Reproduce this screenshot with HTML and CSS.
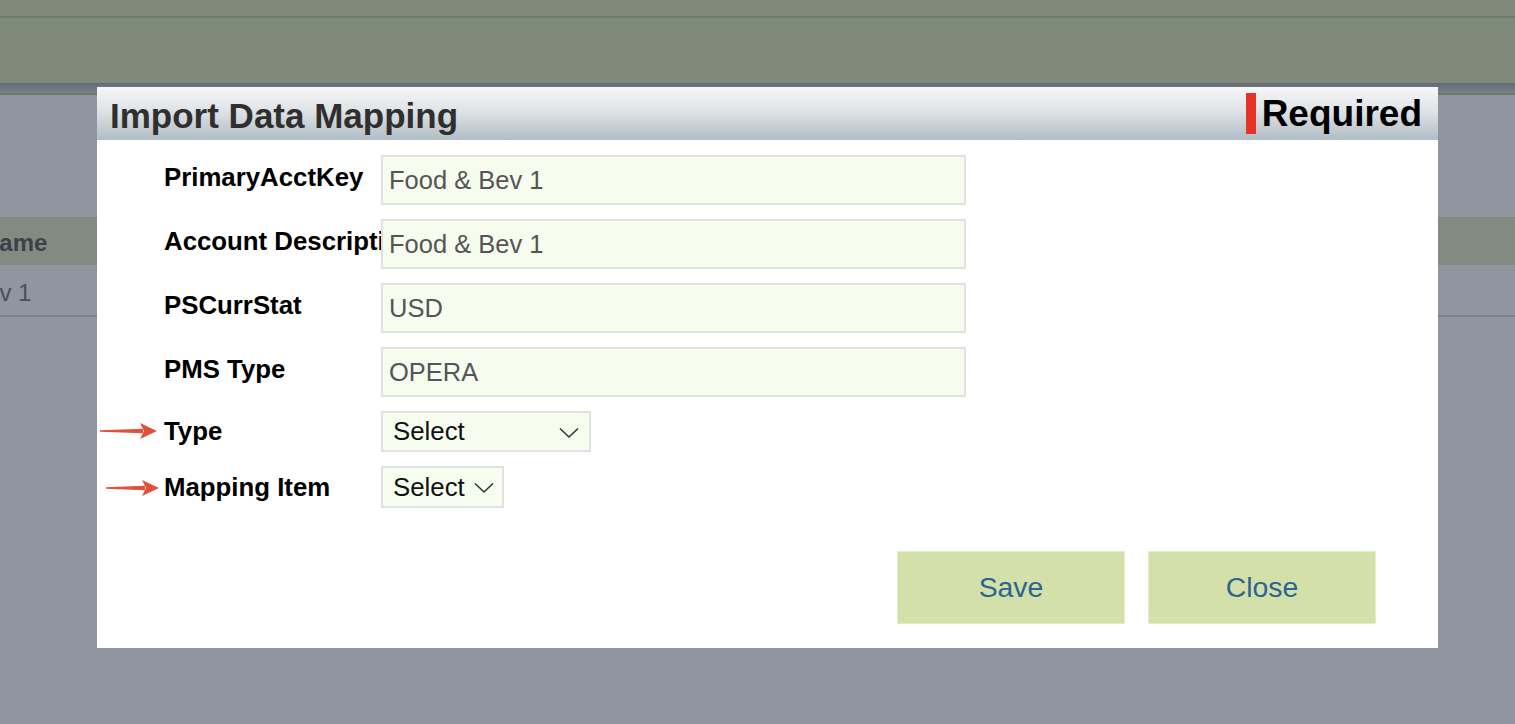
FILE: index.html
```html
<!DOCTYPE html>
<html lang="en">
<head>
    <meta charset="UTF-8">
    <meta name="viewport" content="width=device-width, initial-scale=1.0">
    <title>Import Data Mapping</title>
    <link rel="stylesheet" href="styles.css">
</head>
<body>
    <div class="topbar">
        <div class="topbar-line"></div>
    </div>
    <div class="subbar"></div>

    <div class="page">
        <div class="grid">
            <div class="grid-head">Name</div>
            <div class="grid-row">Food &amp; Bev 1</div>
        </div>
    </div>

    <div class="modal">
        <div class="modal-header">
            <h1>Import Data Mapping</h1>
            <div class="required"><span class="req-bar"></span>Required</div>
        </div>
        <div class="modal-body">
            <div class="form-row">
                <label>PrimaryAcctKey</label>
                <div class="field">Food &amp; Bev 1</div>
            </div>
            <div class="form-row">
                <label>Account Description</label>
                <div class="field">Food &amp; Bev 1</div>
            </div>
            <div class="form-row">
                <label>PSCurrStat</label>
                <div class="field">USD</div>
            </div>
            <div class="form-row">
                <label>PMS Type</label>
                <div class="field">OPERA</div>
            </div>
            <div class="form-row select-row">
                <label class="marked">
                    <svg class="arrow" width="58" height="18" viewBox="0 0 58 18">
                        <path d="M0 8.3 L43 6.8 L43 11.2 L0 9.7 Z" fill="#e0503a"/>
                        <path d="M40 1 L57 9 L40 17 L44 9 Z" fill="#e0503a"/>
                    </svg>
                    Type
                </label>
                <div class="select select-wide">Select
                    <svg class="chev" width="20" height="12" viewBox="0 0 20 12"><path d="M1 1.5 L10 10 L19 1.5" fill="none" stroke="#333" stroke-width="1.6"/></svg>
                </div>
            </div>
            <div class="form-row select-row small">
                <label class="marked">
                    <svg class="arrow arrow-2" width="54" height="18" viewBox="0 0 54 18">
                        <path d="M0 8.3 L39 6.8 L39 11.2 L0 9.7 Z" fill="#e0503a"/>
                        <path d="M36 1 L53 9 L36 17 L40 9 Z" fill="#e0503a"/>
                    </svg>
                    Mapping Item
                </label>
                <div class="select select-narrow">Select
                    <svg class="chev" width="20" height="12" viewBox="0 0 20 12"><path d="M1 1.5 L10 10 L19 1.5" fill="none" stroke="#333" stroke-width="1.6"/></svg>
                </div>
            </div>

            <div class="actions">
                <button type="button">Save</button>
                <button type="button">Close</button>
            </div>
        </div>
    </div>
</body>
</html>
```

FILE: styles.css
```css
* {
    box-sizing: border-box;
}

body {
    font-family: "Liberation Sans", Arial, sans-serif;
    background-color: #8f969f;
    margin: 0;
    padding: 0;
    height: 724px;
    overflow: hidden;
    position: relative;
}

.topbar {
    height: 83px;
    background: #7f8a7a;
    padding-top: 16px;
}

.topbar-line {
    height: 2px;
    background: #6e7d66;
}

.subbar {
    height: 12px;
    background: linear-gradient(#656b74, #7a8089);
    border-bottom: 2px solid #6c7a5c;
}

.page {
    padding-top: 122px;
}

.grid-head {
    height: 48px;
    background: #838b80;
    color: #3b4149;
    font-weight: bold;
    font-size: 24px;
    line-height: 52px;
    text-indent: -18px;
    white-space: nowrap;
}

.grid-row {
    height: 52px;
    line-height: 56px;
    color: #4a5058;
    font-size: 24px;
    text-indent: -114px;
    white-space: nowrap;
    border-bottom: 2px solid #7b828b;
}

/* modal */

.modal {
    position: absolute;
    left: 97px;
    top: 87px;
    width: 1341px;
    height: 561px;
    background: white;
}

.modal-header {
    height: 53px;
    display: flex;
    align-items: center;
    justify-content: space-between;
    padding: 0 16px 0 13px;
    background: linear-gradient(#f6f7f8, #dfe3e6 45%, #b1bcc4);
}

.modal-header h1 {
    margin: 0;
    font-size: 35px;
    color: #2f2f2f;
    padding-top: 4px;
}

.required {
    display: flex;
    align-items: center;
    font-size: 37px;
    font-weight: bold;
    color: #000;
}

.req-bar {
    width: 10px;
    height: 41px;
    background: #e53426;
    margin-right: 6px;
}

.modal-body {
    padding: 15px 62px 0 67px;
}

.form-row {
    display: flex;
    align-items: center;
    margin-bottom: 14px;
}

.form-row label {
    width: 217px;
    flex-shrink: 0;
    font-size: 25.8px;
    font-weight: bold;
    color: #000;
    white-space: nowrap;
    overflow: hidden;
    padding-bottom: 5px;
}

.field {
    width: 585px;
    height: 50px;
    border: 2px solid #e1e1e1;
    background: #f6fdef;
    font-size: 25.5px;
    color: #555;
    line-height: 46px;
    padding-left: 6px;
}

.select-row {
    margin-top: 1px;
}

.select-row label {
    padding-bottom: 0;
    overflow: visible;
    position: relative;
}

.arrow {
    position: absolute;
    left: -64px;
    top: 5px;
}

.arrow-2 {
    left: -58px;
    top: 6px;
}

.select {
    height: 41px;
    border: 2px solid #e1e1e1;
    background: #f6fdef;
    font-size: 25.8px;
    color: #111;
    display: flex;
    align-items: center;
    justify-content: space-between;
    padding: 0 10px 0 10px;
}

.select-wide {
    width: 210px;
}

.select-narrow {
    width: 123px;
    height: 42px;
    padding-right: 8px;
}

.chev {
    margin-top: 2px;
}

.actions {
    display: flex;
    justify-content: flex-end;
    gap: 23px;
    margin-top: 43px;
}

.actions button {
    width: 228px;
    height: 73px;
    border: 1px solid #e4ecc8;
    background: #d4e0a9;
    color: #2e6491;
    font-family: "Liberation Sans", Arial, sans-serif;
    font-size: 28.4px;
    cursor: pointer;
}
```
